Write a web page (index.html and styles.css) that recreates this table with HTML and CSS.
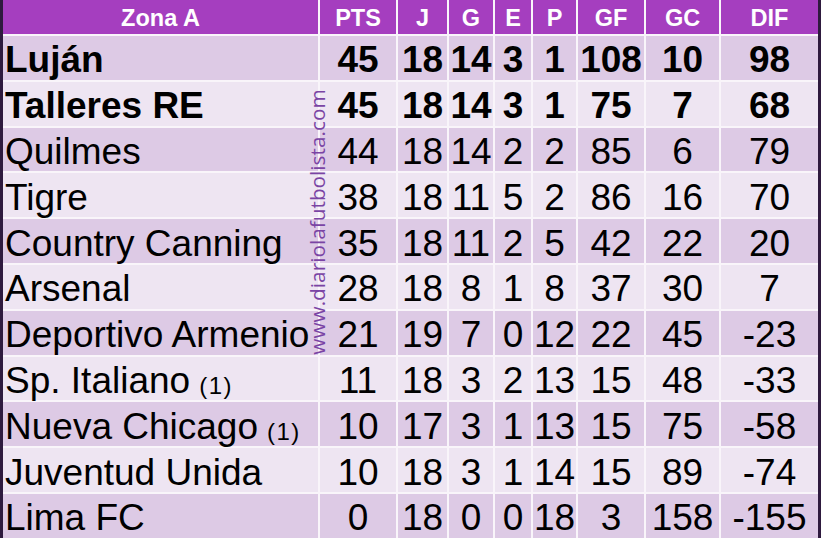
FILE: index.html
```html
<!DOCTYPE html>
<html lang="es">
<head>
<meta charset="utf-8">
<title>Zona A</title>
<link rel="stylesheet" href="styles.css">
</head>
<body>
<div class="frame">
  <div class="board">
    <div class="hd">Zona A</div><div class="hd">PTS</div><div class="hd">J</div><div class="hd">G</div><div class="hd">E</div><div class="hd">P</div><div class="hd">GF</div><div class="hd">GC</div><div class="hd">DIF</div>

    <div class="c name odd b">Luján</div><div class="c odd b">45</div><div class="c odd b">18</div><div class="c odd b">14</div><div class="c odd b">3</div><div class="c odd b">1</div><div class="c odd b">108</div><div class="c odd b">10</div><div class="c odd b">98</div>

    <div class="c name even b">Talleres RE</div><div class="c even b">45</div><div class="c even b">18</div><div class="c even b">14</div><div class="c even b">3</div><div class="c even b">1</div><div class="c even b">75</div><div class="c even b">7</div><div class="c even b">68</div>

    <div class="c name odd">Quilmes</div><div class="c odd">44</div><div class="c odd">18</div><div class="c odd">14</div><div class="c odd">2</div><div class="c odd">2</div><div class="c odd">85</div><div class="c odd">6</div><div class="c odd">79</div>

    <div class="c name even">Tigre</div><div class="c even">38</div><div class="c even">18</div><div class="c even">11</div><div class="c even">5</div><div class="c even">2</div><div class="c even">86</div><div class="c even">16</div><div class="c even">70</div>

    <div class="c name odd">Country Canning</div><div class="c odd">35</div><div class="c odd">18</div><div class="c odd">11</div><div class="c odd">2</div><div class="c odd">5</div><div class="c odd">42</div><div class="c odd">22</div><div class="c odd">20</div>

    <div class="c name even">Arsenal</div><div class="c even">28</div><div class="c even">18</div><div class="c even">8</div><div class="c even">1</div><div class="c even">8</div><div class="c even">37</div><div class="c even">30</div><div class="c even">7</div>

    <div class="c name odd">Deportivo Armenio</div><div class="c odd">21</div><div class="c odd">19</div><div class="c odd">7</div><div class="c odd">0</div><div class="c odd">12</div><div class="c odd">22</div><div class="c odd">45</div><div class="c odd">-23</div>

    <div class="c name even">Sp. Italiano <span class="note">(1)</span></div><div class="c even">11</div><div class="c even">18</div><div class="c even">3</div><div class="c even">2</div><div class="c even">13</div><div class="c even">15</div><div class="c even">48</div><div class="c even">-33</div>

    <div class="c name odd">Nueva Chicago <span class="note">(1)</span></div><div class="c odd">10</div><div class="c odd">17</div><div class="c odd">3</div><div class="c odd">1</div><div class="c odd">13</div><div class="c odd">15</div><div class="c odd">75</div><div class="c odd">-58</div>

    <div class="c name even">Juventud Unida</div><div class="c even">10</div><div class="c even">18</div><div class="c even">3</div><div class="c even">1</div><div class="c even">14</div><div class="c even">15</div><div class="c even">89</div><div class="c even">-74</div>

    <div class="c name odd">Lima FC</div><div class="c odd">0</div><div class="c odd">18</div><div class="c odd">0</div><div class="c odd">0</div><div class="c odd">18</div><div class="c odd">3</div><div class="c odd">158</div><div class="c odd">-155</div>
  </div>
  <div class="mark">www.diariolafutbolista.com</div>
</div>
</body>
</html>
```

FILE: styles.css
```css
html, body {
  margin: 0;
  padding: 0;
  background: #2e1a3e;
  overflow: hidden;
}
.frame {
  position: relative;
  width: 821px;
  height: 538px;
  overflow: hidden;
  background: #2e1a3e;
}
.board {
  margin-left: 3px;
  width: 815px;
  display: grid;
  grid-template-columns: 315px 76px 49px 44px 36px 43px 66px 73px 97px;
  grid-template-rows: 34px repeat(11, 43.8px);
  gap: 2px;
  background: #f9f5fa;
  font-family: "Liberation Sans", Arial, sans-serif;
  color: #000;
}
.hd {
  background: #a53ebf;
  color: #fff;
  font-weight: bold;
  font-size: 23.5px;
  display: flex;
  align-items: center;
  justify-content: center;
  padding-top: 3px;
  box-sizing: border-box;
}
.c {
  font-size: 37px;
  display: flex;
  align-items: center;
  justify-content: center;
  padding-top: 5px;
  box-sizing: border-box;
  white-space: nowrap;
}
.c.name {
  justify-content: flex-start;
  padding-left: 2px;
}
.b { font-weight: bold; }
.odd { background: #ddcae5; }
.even { background: #eee5f2; }
.note {
  font-size: 24px;
  letter-spacing: 1.5px;
  margin-left: 9px;
  align-self: center;
  padding-top: 10px;
}
.mark {
  position: absolute;
  left: 317px;
  top: 222px;
  transform: translate(-50%, -50%) rotate(-90deg);
  font-family: "Open Sans", "DejaVu Sans", sans-serif;
  font-size: 20.8px;
  color: #7a44a4;
  white-space: nowrap;
  line-height: 1;
}
```
